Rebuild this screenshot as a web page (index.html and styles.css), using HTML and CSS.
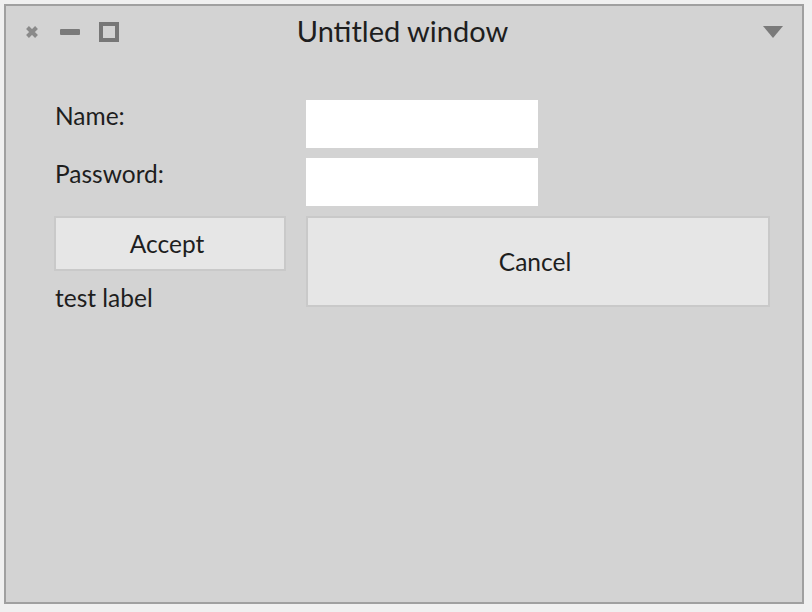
FILE: index.html
```html
<!DOCTYPE html>
<html>
<head>
<meta charset="utf-8">
<link rel="stylesheet" href="styles.css">
</head>
<body>
<div class="window">
  <div class="titlebar">
    <div class="controls">
      <svg class="ic-close" width="14" height="14" viewBox="0 0 14 14"><path d="M2.5 2.5 L11.5 11.5 M11.5 2.5 L2.5 11.5" stroke="#8a8a8a" stroke-width="4" stroke-linecap="butt"/></svg>
      <svg class="ic-min" width="20" height="7" viewBox="0 0 20 7"><rect x="0" y="0" width="20" height="6" rx="1" fill="#7a7a7a"/></svg>
      <svg class="ic-max" width="20" height="20" viewBox="0 0 20 20"><rect x="2" y="2" width="16" height="16" fill="none" stroke="#777" stroke-width="4"/></svg>
    </div>
    <div class="title">Untitled window</div>
    <svg class="ic-menu" width="20" height="13" viewBox="0 0 20 13"><path d="M0 0 H20 L10 12 Z" fill="#7a7a7a"/></svg>
  </div>
  <div class="content">
    <div class="label">Name:</div>
    <div class="field"></div>
    <div class="label">Password:</div>
    <div class="field"></div>
    <div class="btn accept">Accept</div>
    <div class="btn cancel">Cancel</div>
    <div class="label test">test label</div>
  </div>
</div>
</body>
</html>
```
FILE: styles.css
```css
html, body {
  margin: 0;
  padding: 0;
  background: #f0f0f0;
}
body {
  font-family: Lato, "Open Sans", sans-serif;
  color: #1e1e1e;
}
.window {
  margin: 4px;
  width: 800px;
  height: 600px;
  box-sizing: border-box;
  border: 2px solid #a0a0a0;
  background: #d3d3d3;
  display: flex;
  flex-direction: column;
}
.titlebar {
  height: 52px;
  position: relative;
  display: flex;
  align-items: center;
  justify-content: center;
}
.controls {
  position: absolute;
  left: 19px;
  top: 16px;
  display: flex;
  align-items: center;
}
.ic-min { margin-left: 21px; }
.ic-max { margin-left: 19px; }
.ic-menu {
  position: absolute;
  right: 19px;
  top: 20px;
}
.title {
  font-size: 29px;
  line-height: 34px;
  margin-top: -2px;
  margin-left: -3px;
}
.content {
  display: grid;
  grid-template-columns: 232px 232px;
  grid-template-rows: 48px 48px 55px 26px;
  column-gap: 20px;
  row-gap: 10px;
  padding: 42px 0 0 48px;
}
.label {
  font-size: 24.5px;
  line-height: 28px;
  padding-top: 2px;
  padding-left: 1px;
}
.field {
  background: #ffffff;
}
.btn {
  background: #e6e6e6;
  border: 2px solid #c9c9c9;
  box-sizing: border-box;
  font-size: 24.5px;
  display: flex;
  align-items: center;
  justify-content: center;
  padding-right: 6px;
}
.accept {
  grid-column: 1;
  grid-row: 3;
  padding-bottom: 1px;
}
.cancel {
  grid-column: 2;
  grid-row: 3 / span 2;
  width: 464px;
}
.test {
  grid-column: 1;
  grid-row: 4;
  padding-top: 3px;
}
```
